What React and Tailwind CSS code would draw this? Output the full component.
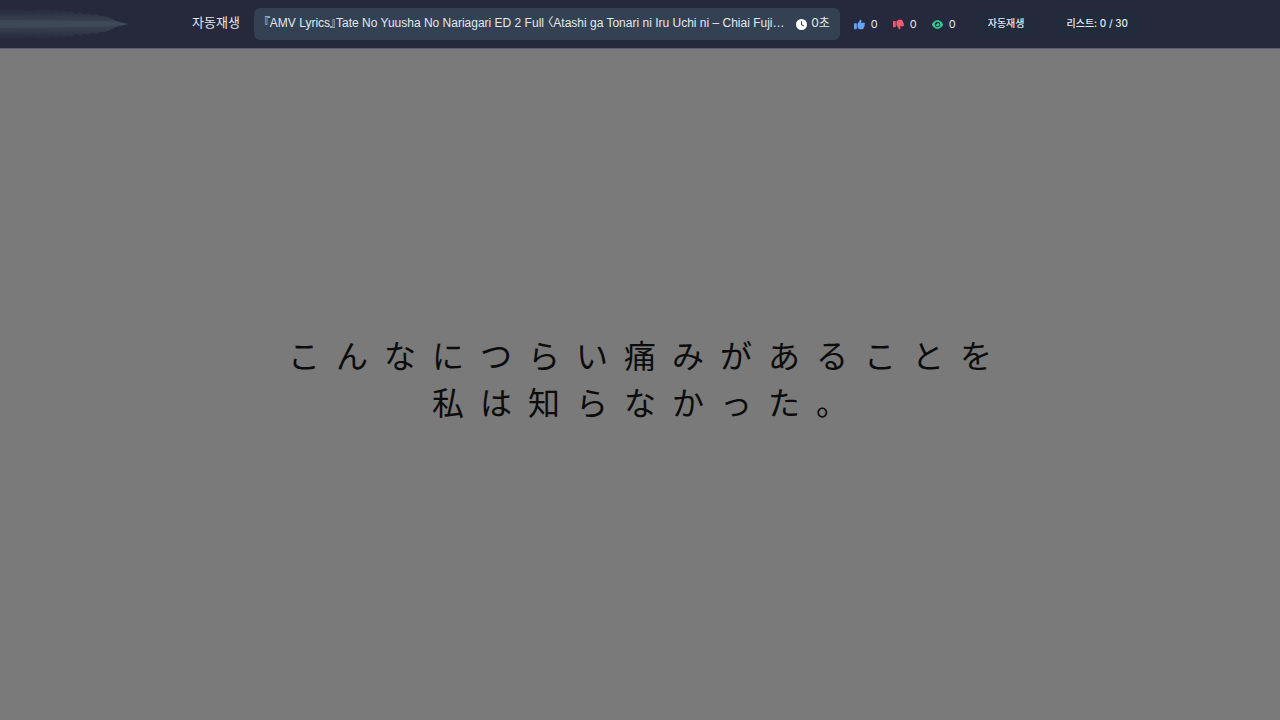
import React from 'react';
import { FaClock, FaEye, FaThumbsDown, FaThumbsUp } from 'react-icons/fa6';

const video = {
  title: '『AMV Lyrics』Tate No Yuusha No Nariagari ED 2 Full 〈Atashi ga Tonari ni Iru Uchi ni – Chiai Fuji…',
  seconds: 0,
  likes: 0,
  dislikes: 0,
  views: 0,
};

const lyrics = ['こんなにつらい痛みがあることを', '私は知らなかった。'];

// half height of the wave at every 4px
const levels = [
  14, 15, 13, 15, 14, 15, 13, 14, 13, 15, 16, 14, 15, 13, 15, 12, 14, 12, 13, 10, 12, 10, 11, 9, 10, 8, 8, 7, 5, 3, 2, 1, 0,
];

const Wave = () => {
  const top = levels.map((l, i) => `${i * 4},${24 - l}`);
  const bottom = levels.map((l, i) => `${i * 4},${24 + l}`).reverse();

  return (
    <svg width="132" height="48" viewBox="0 0 132 48" aria-hidden="true">
      <defs>
        <linearGradient id="wave" x1="0" y1="0" x2="0" y2="1">
          <stop offset="0" stopColor="#3f4a59" stopOpacity="0" />
          <stop offset="0.5" stopColor="#3f4a59" stopOpacity="0.9" />
          <stop offset="1" stopColor="#3f4a59" stopOpacity="0" />
        </linearGradient>
      </defs>
      <polygon points={[...top, ...bottom].join(' ')} fill="url(#wave)" />
      <path d="M0 20 L108 21 L130 24 L108 27 L0 28 Z" fill="#46515f" fillOpacity="0.35" />
    </svg>
  );
};

const Stat = ({ icon: Icon, color, value, label }) => (
  <span className="flex items-center gap-1.5" aria-label={label}>
    <Icon className={`size-[11px] ${color}`} />
    <span className="pb-px">{value}</span>
  </span>
);

const Header = () => (
  <header className="flex h-[49px] shrink-0 items-center border-b border-[#5c5b7c] bg-[#26293b] text-[#e2e8f0]">
    <div className="w-[15%] shrink-0">
      <Wave />
    </div>
    <h1 className="mr-3.5 shrink-0 pb-1 text-[13px] leading-4">자동재생</h1>
    <div className="flex h-8 w-[586px] min-w-0 items-center gap-1 rounded-md bg-[#344152] px-2.5 text-[12px] leading-4">
      <p className="min-w-0 flex-1 truncate pb-0.5 font-['Liberation_Sans','Noto_Sans_CJK_KR',sans-serif] [font-feature-settings:'palt']">
        {video.title}
      </p>
      <FaClock className="size-[11px] shrink-0 text-white" />
      <span className="shrink-0 pb-0.5">{`${video.seconds}초`}</span>
    </div>
    <div className="ml-3.5 flex shrink-0 items-center gap-[15px] text-[11px] leading-4">
      <Stat icon={FaThumbsUp} color="text-[#60a5fa]" value={video.likes} label="좋아요" />
      <Stat icon={FaThumbsDown} color="text-[#f05b70]" value={video.dislikes} label="싫어요" />
      <Stat icon={FaEye} color="text-[#34d399]" value={video.views} label="조회수" />
    </div>
    <div className="ml-5 flex shrink-0 items-center gap-[18px] text-[10px] leading-4 font-medium">
      <button type="button" className="rounded-md bg-[#222b3b] px-3 pt-0.5 pb-1">자동재생</button>
      <button type="button" className="rounded-md bg-[#222b3b] px-3 pt-0.5 pb-1">{'리스트: 0 / 30'}</button>
    </div>
  </header>
);

export default function App() {
  return (
    <div className="flex min-h-screen flex-col bg-[#7a7a7a] font-['Inter','Noto_Sans_CJK_KR',sans-serif]">
      <Header />
      <main
        lang="ja"
        className="flex flex-1 flex-col items-center justify-center pb-3.5 font-['Noto_Sans_CJK_JP',serif] text-[32px] leading-[47px] text-[#0c0c0c]"
      >
        {lyrics.map((line) => (
          <p key={line}>{line.split('').join('\u2002')}</p>
        ))}
      </main>
    </div>
  );
}
